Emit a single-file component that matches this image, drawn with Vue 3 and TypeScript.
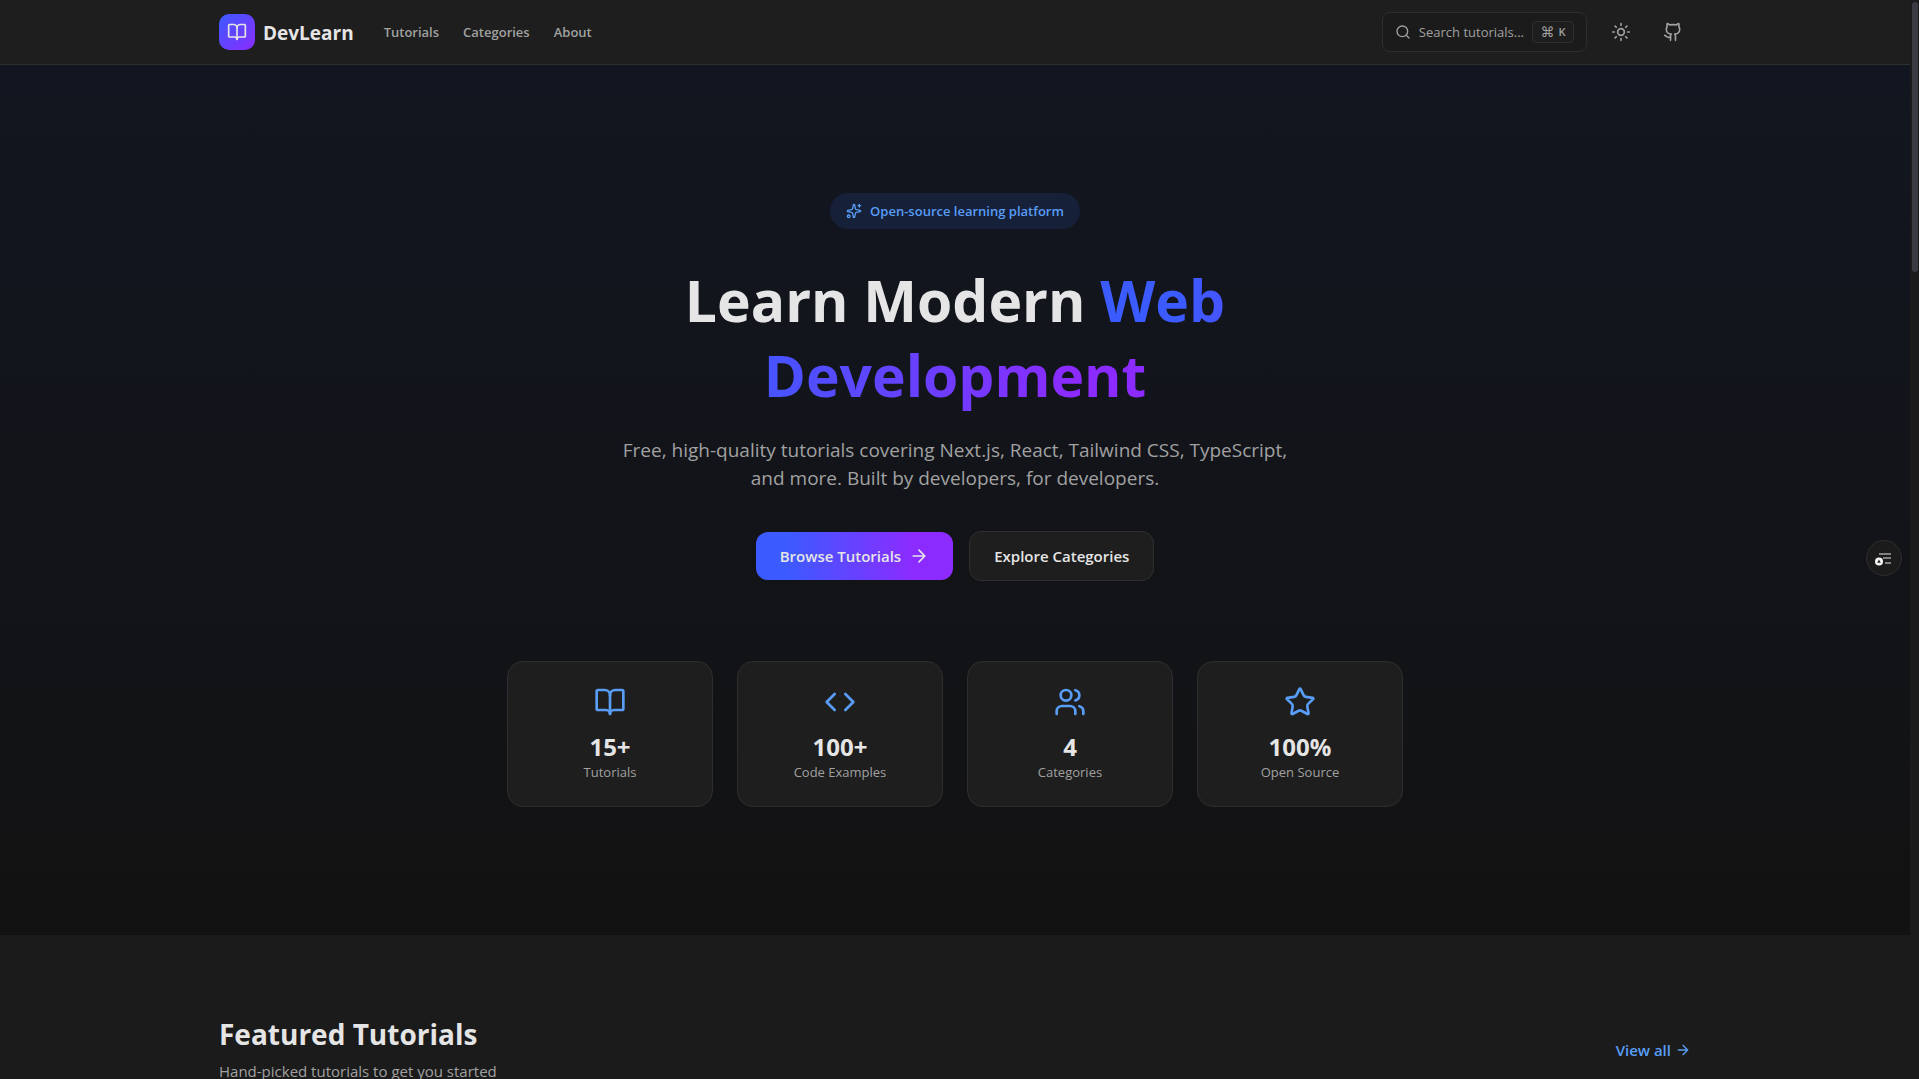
<script setup lang="ts">
interface NavItem {
  label: string
  href: string
}

interface Stat {
  value: string
  label: string
  paths: string[]
}

const navItems: NavItem[] = [
  { label: 'Tutorials', href: '#tutorials' },
  { label: 'Categories', href: '#categories' },
  { label: 'About', href: '#about' },
]

const book: string[] = [
  'M12 7v14',
  'M3 18a1 1 0 0 1-1-1V4a1 1 0 0 1 1-1h5a4 4 0 0 1 4 4 4 4 0 0 1 4-4h5a1 1 0 0 1 1 1v13a1 1 0 0 1-1 1h-6a3 3 0 0 0-3 3 3 3 0 0 0-3-3z',
]

const stats: Stat[] = [
  { value: '15+', label: 'Tutorials', paths: book },
  { value: '100+', label: 'Code Examples', paths: ['m16 18 6-6-6-6', 'm8 6-6 6 6 6'] },
  {
    value: '4',
    label: 'Categories',
    paths: [
      'M16 21v-2a4 4 0 0 0-4-4H6a4 4 0 0 0-4 4v2',
      'M9 3a4 4 0 1 0 0 8a4 4 0 1 0 0-8z',
      'M22 21v-2a4 4 0 0 0-3-3.87',
      'M16 3.13a4 4 0 0 1 0 7.75',
    ],
  },
  {
    value: '100%',
    label: 'Open Source',
    paths: [
      'M11.525 2.295a.53.53 0 0 1 .95 0l2.31 4.679a2.123 2.123 0 0 0 1.595 1.16l5.166.756a.53.53 0 0 1 .294.904l-3.736 3.638a2.123 2.123 0 0 0-.611 1.878l.882 5.14a.53.53 0 0 1-.771.56l-4.618-2.428a2.122 2.122 0 0 0-1.973 0L6.396 21.01a.53.53 0 0 1-.77-.56l.881-5.139a2.122 2.122 0 0 0-.611-1.879L2.16 9.795a.53.53 0 0 1 .294-.906l5.165-.755a2.122 2.122 0 0 0 1.597-1.16z',
    ],
  },
]
</script>

<template>
  <div class="viewport">
    <div class="page">
      <header class="header">
        <div class="container header-row">
          <div class="header-left">
            <a class="brand" href="#home">
              <span class="brand-mark">
                <svg class="icon icon-20" viewBox="0 0 24 24" aria-hidden="true">
                  <path v-for="d in book" :key="d" :d="d" />
                </svg>
              </span>
              <span class="brand-name">DevLearn</span>
            </a>
            <nav class="nav">
              <a v-for="item in navItems" :key="item.label" :href="item.href">{{ item.label }}</a>
            </nav>
          </div>
          <div class="header-right">
            <button class="search" type="button">
              <svg class="icon icon-16" viewBox="0 0 24 24" aria-hidden="true">
                <path d="m21 21-4.34-4.34" />
                <circle cx="11" cy="11" r="8" />
              </svg>
              <span class="search-label">Search tutorials...</span>
              <kbd class="kbd"><span class="kbd-cmd">⌘</span><span>K</span></kbd>
            </button>
            <button class="icon-button" type="button" aria-label="Toggle theme">
              <svg class="icon icon-20" viewBox="0 0 24 24" aria-hidden="true">
                <circle cx="12" cy="12" r="4" />
                <path d="M12 2v2M12 20v2M4.93 4.93l1.41 1.41M17.66 17.66l1.41 1.41M2 12h2M20 12h2M6.34 17.66l-1.41 1.41M19.07 4.93l-1.41 1.41" />
              </svg>
            </button>
            <a class="icon-button" href="#github" aria-label="GitHub">
              <svg class="icon icon-20" viewBox="0 0 24 24" aria-hidden="true">
                <path d="M15 22v-4a4.8 4.8 0 0 0-1-3.5c3 0 6-2 6-5.5.08-1.25-.27-2.48-1-3.5.28-1.15.28-2.35 0-3.5 0 0-1 0-3 1.5-2.64-.5-5.36-.5-8 0C6 2 5 2 5 2c-.3 1.15-.3 2.35 0 3.5A5.403 5.403 0 0 0 4 9c0 3.5 3 5.5 6 5.5-.39.49-.68 1.05-.85 1.65-.17.6-.22 1.23-.15 1.85v4" />
                <path d="M9 18c-4.51 2-5-2-7-2" />
              </svg>
            </a>
          </div>
        </div>
      </header>

      <main>
        <section class="hero">
          <div class="badge">
            <svg class="icon icon-16" viewBox="0 0 24 24" aria-hidden="true">
              <path d="M11.017 2.814a1 1 0 0 1 1.966 0l1.051 5.558a2 2 0 0 0 1.594 1.594l5.558 1.051a1 1 0 0 1 0 1.966l-5.558 1.051a2 2 0 0 0-1.594 1.594l-1.051 5.558a1 1 0 0 1-1.966 0l-1.051-5.558a2 2 0 0 0-1.594-1.594l-5.558-1.051a1 1 0 0 1 0-1.966l5.558-1.051a2 2 0 0 0 1.594-1.594z" />
              <path d="M20 2v4M22 4h-4" />
              <circle cx="4" cy="20" r="2" />
            </svg>
            <span>Open-source learning platform</span>
          </div>
          <h1 class="title">Learn Modern <span class="title-accent">Web<br />Development</span></h1>
          <p class="lead">
            Free, high-quality tutorials covering Next.js, React, Tailwind CSS, TypeScript,<br />
            and more. Built by developers, for developers.
          </p>
          <div class="actions">
            <a class="button button-primary" href="#tutorials">
              <span>Browse Tutorials</span>
              <svg class="icon icon-20" viewBox="0 0 24 24" aria-hidden="true">
                <path d="M5 12h14M12 5l7 7-7 7" />
              </svg>
            </a>
            <a class="button button-secondary" href="#categories">Explore Categories</a>
          </div>
          <ul class="stats">
            <li v-for="stat in stats" :key="stat.label" class="stat">
              <svg class="icon icon-32" viewBox="0 0 24 24" aria-hidden="true">
                <path v-for="d in stat.paths" :key="d" :d="d" />
              </svg>
              <strong class="stat-value">{{ stat.value }}</strong>
              <span class="stat-label">{{ stat.label }}</span>
            </li>
          </ul>
        </section>

        <section id="tutorials" class="featured">
          <div class="container featured-row">
            <div>
              <h2 class="featured-title">Featured Tutorials</h2>
              <p class="featured-text">Hand-picked tutorials to get you started</p>
            </div>
            <a class="view-all" href="#all">
              <span>View all</span>
              <svg class="icon icon-16" viewBox="0 0 24 24" aria-hidden="true">
                <path d="M5 12h14M12 5l7 7-7 7" />
              </svg>
            </a>
          </div>
        </section>
      </main>

      <button class="toc" type="button" aria-label="Open contents">
        <svg class="toc-icon" viewBox="0 0 18 16" aria-hidden="true">
          <path d="M4 4h12M8 8h8M10 13h6" fill="none" stroke="#e5e5e5" stroke-width="1.2" />
          <circle cx="4" cy="11.5" r="4" fill="#f5f5f5" />
          <path d="M4 9.5 5.8 12.8H2.2z" fill="#1e1e1e" />
        </svg>
      </button>
    </div>
    <div class="rail" aria-hidden="true"><div class="thumb"></div></div>
  </div>
</template>

<style>
body {
  background: #121212;
}
</style>

<style scoped>
.viewport {
  display: grid;
  grid-template-columns: minmax(0, 1fr) 9px;
  height: 100vh;
  overflow: hidden;
  background: #121212;
  color: #e5e5e5;
  font-family: 'Open Sans', 'Noto Sans', sans-serif;
  font-size: 15px;
  line-height: 24px;
}

.viewport *,
.viewport *::before {
  box-sizing: border-box;
}

.page {
  position: relative;
  height: 100vh;
  overflow: hidden;
}

a {
  color: inherit;
  text-decoration: none;
}

button {
  font: inherit;
  color: inherit;
  cursor: pointer;
}

h1,
h2,
p,
ul {
  margin: 0;
  padding: 0;
}

.container {
  max-width: 1536px;
  margin: 0 auto;
  padding: 0 32px;
}

.icon {
  display: block;
  flex: none;
  fill: none;
  stroke: currentColor;
  stroke-width: 2;
  stroke-linecap: round;
  stroke-linejoin: round;
}

.icon-16 {
  width: 16px;
  height: 16px;
}

.icon-20 {
  width: 20px;
  height: 20px;
}

.icon-32 {
  width: 32px;
  height: 32px;
}

.header {
  background: #1e1e1e;
  border-bottom: 1px solid #2e2e2e;
}

.header-row {
  display: flex;
  align-items: center;
  justify-content: space-between;
  height: 64px;
}

.header-left {
  display: flex;
  align-items: center;
  gap: 32px;
}

.header-right {
  display: flex;
  align-items: center;
  gap: 16px;
  color: #a1a1a1;
}

.brand {
  display: flex;
  align-items: center;
  gap: 8px;
}

.brand-mark {
  display: grid;
  place-items: center;
  width: 36px;
  height: 36px;
  border-radius: 10px;
  background: linear-gradient(135deg, #3b5bff, #8b2bff);
}

.brand-name {
  padding-top: 2px;
  font-size: 19px;
  line-height: 28px;
  font-weight: 700;
}

.nav {
  display: flex;
  gap: 24px;
  color: #a1a1a1;
  font-size: 13px;
  line-height: 20px;
  font-weight: 600;
}

.header-left .nav {
  margin-left: -2px;
}

.search {
  display: flex;
  align-items: center;
  gap: 8px;
  height: 40px;
  padding: 0 12px;
  border: 1px solid #2e2e2e;
  border-radius: 8px;
  background: #1b1b1b;
  font-size: 13px;
  line-height: 20px;
}

.kbd {
  display: flex;
  align-items: center;
  justify-content: center;
  gap: 4px;
  width: 42px;
  height: 22px;
  border: 1px solid #2e2e2e;
  border-radius: 4px;
  background: #1e1e1e;
  font-family: inherit;
  font-size: 11px;
  line-height: 16px;
  font-weight: 600;
}

.kbd-cmd {
  font-family: 'DejaVu Sans', sans-serif;
  font-size: 14px;
  font-weight: 400;
}

.icon-button {
  display: grid;
  place-items: center;
  width: 36px;
  height: 36px;
  padding: 0;
  border: 0;
  border-radius: 8px;
  background: transparent;
}

.hero {
  display: flex;
  flex-direction: column;
  align-items: center;
  padding: 128px 32px;
  background: linear-gradient(to bottom, #121620, #121212);
  text-align: center;
}

.badge {
  display: flex;
  align-items: center;
  gap: 8px;
  padding: 8px 16px;
  border-radius: 18px;
  background: #162038;
  color: #589df6;
  font-size: 13px;
  line-height: 20px;
  font-weight: 600;
}

.title {
  margin-top: 34px;
  font-size: 57px;
  line-height: 75px;
  font-weight: 700;
}

.title-accent {
  background: linear-gradient(to right, #3b5bff 15%, #8b2bff 85%);
  background-clip: text;
  color: transparent;
}

.lead {
  margin-top: 23px;
  color: #a1a1a1;
  font-size: 19px;
  line-height: 28px;
}

.actions {
  display: flex;
  align-items: center;
  gap: 16px;
  margin-top: 39px;
}

.button {
  display: flex;
  align-items: center;
  gap: 8px;
  padding: 12px 24px;
  border-radius: 12px;
  font-weight: 600;
}

.button-primary {
  background: linear-gradient(to right, #3b5bff 15%, #8b2bff 80%);
}

.button-secondary {
  border: 1px solid #2e2e2e;
  background: #1e1e1e;
}

.stats {
  display: grid;
  grid-template-columns: repeat(4, minmax(0, 1fr));
  gap: 24px;
  width: 100%;
  max-width: 896px;
  margin-top: 80px;
  list-style: none;
}

.stat {
  display: flex;
  flex-direction: column;
  align-items: center;
  padding: 24px;
  border: 1px solid #2e2e2e;
  border-radius: 16px;
  background: #1e1e1e;
}

.stat .icon {
  color: #589df6;
}

.stat-value {
  margin-top: 13px;
  font-size: 24px;
  line-height: 31px;
  font-weight: 700;
}

.stat-label {
  color: #a1a1a1;
  font-size: 13px;
  line-height: 20px;
}

.featured {
  padding: 81px 0;
  background: #1b1b1b;
}

.featured-row {
  display: flex;
  align-items: center;
  justify-content: space-between;
}

.featured-title {
  font-size: 28px;
  line-height: 36px;
  font-weight: 700;
}

.featured-text {
  margin-top: 7px;
  color: #a1a1a1;
}

.view-all {
  display: flex;
  align-items: center;
  gap: 4px;
  color: #589df6;
  font-weight: 600;
}

.toc {
  position: absolute;
  top: 50vh;
  right: 8px;
  display: grid;
  place-items: center;
  width: 36px;
  height: 36px;
  padding: 0;
  border: 1px solid #2e2e2e;
  border-radius: 50%;
  background: #1b1b1b;
}

.toc-icon {
  width: 18px;
  height: 16px;
}

.rail {
  padding: 2px 1px 0 2px;
  background: #1b1b1b;
}

.thumb {
  height: 25vh;
  border-radius: 3px;
  background: #3a3a42;
}
</style>
